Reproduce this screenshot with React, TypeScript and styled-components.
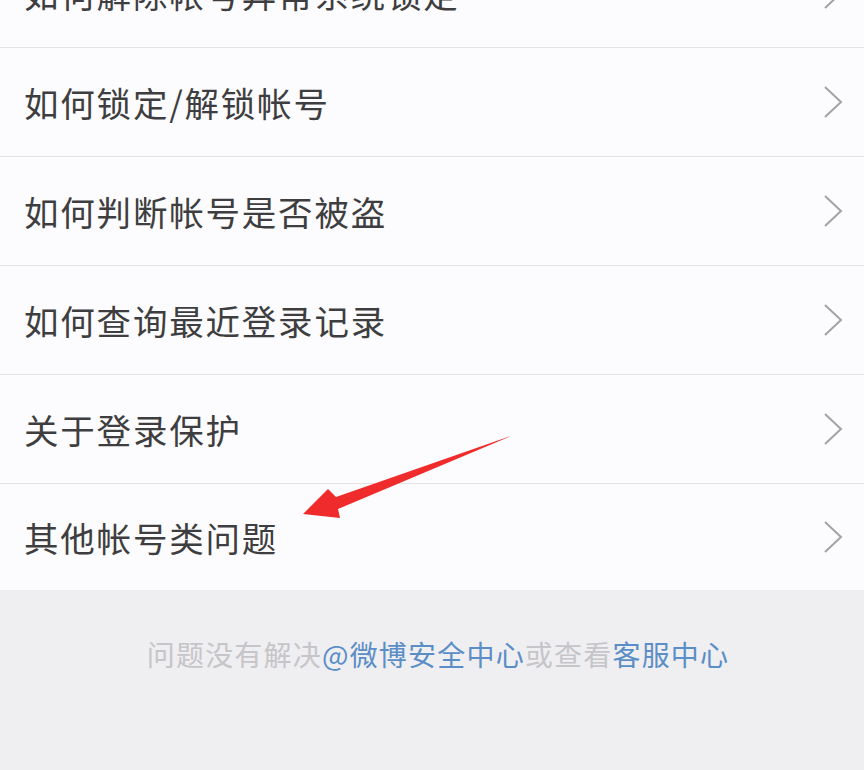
import React from "react";
import styled, { createGlobalStyle } from "styled-components";

const Global = createGlobalStyle`
  html, body {
    margin: 0;
    padding: 0;
    background: #efeef1;
    overflow: hidden;
  }
  body {
    font-family: "Noto Sans CJK SC", "Noto Sans", sans-serif;
  }
`;

const Page = styled.div`
  position: relative;
  width: 864px;
  height: 770px;
  overflow: hidden;
  background: #efeef1;
  display: flex;
  flex-direction: column;
`;

const List = styled.ul`
  list-style: none;
  margin: -61px 0 0 0;
  padding: 0;
  background: #fcfbfd;
`;

const Row = styled.li<{ $last?: boolean }>`
  height: ${(p) => (p.$last ? 106 : 108)}px;
  display: flex;
  align-items: center;
  justify-content: space-between;
  padding: 0 20px 0 24px;
  border-bottom: ${(p) => (p.$last ? "none" : "1px solid #e4e2e6")};
`;

const Label = styled.span`
  font-size: 34.5px;
  letter-spacing: 1.8px;
  color: #3e3e40;
  line-height: 1;
`;

const Chevron = styled.svg`
  width: 22px;
  height: 34px;
  flex: none;
`;

const Footer = styled.div`
  flex: 1;
  display: flex;
  justify-content: center;
  padding: 44px 0 0 12px;
  font-size: 28px;
  letter-spacing: 1.2px;
  color: #c6c5c9;
`;

const Link = styled.span`
  color: #5b8ec6;
`;

const Arrow = styled.svg`
  position: absolute;
  left: 0;
  top: 0;
  width: 864px;
  height: 770px;
  pointer-events: none;
`;

const items = [
  "如何解除帐号异常系统锁定",
  "如何锁定/解锁帐号",
  "如何判断帐号是否被盗",
  "如何查询最近登录记录",
  "关于登录保护",
  "其他帐号类问题",
];

export default function App() {
  return (
    <Page>
      <Global />
      <List>
        {items.map((t, i) => (
          <Row key={t} $last={i === items.length - 1}>
            <Label>{t}</Label>
            <Chevron viewBox="0 0 22 34">
              <path d="M3 2 L19 17 L3 32" fill="none" stroke="#a3a2a7" strokeWidth="2" />
            </Chevron>
          </Row>
        ))}
      </List>
      <Footer>
        问题没有解决<Link>@微博安全中心</Link>或查看<Link>客服中心</Link>
      </Footer>
      <Arrow viewBox="0 0 864 770">
        <polygon
          points="511,436 336,497 328,489 303,514 340,518 338,509"
          fill="#f02b2b"
        />
      </Arrow>
    </Page>
  );
}
